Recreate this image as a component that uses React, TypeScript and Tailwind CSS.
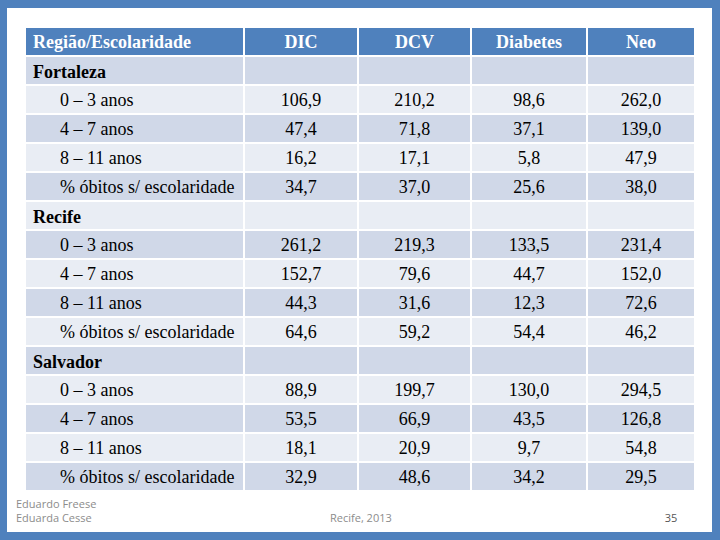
const regions = [
  {
    name: "Fortaleza",
    rows: [
      ["0 – 3 anos", "106,9", "210,2", "98,6", "262,0"],
      ["4 – 7 anos", "47,4", "71,8", "37,1", "139,0"],
      ["8 – 11 anos", "16,2", "17,1", "5,8", "47,9"],
      ["% óbitos s/ escolaridade", "34,7", "37,0", "25,6", "38,0"],
    ],
  },
  {
    name: "Recife",
    rows: [
      ["0 – 3 anos", "261,2", "219,3", "133,5", "231,4"],
      ["4 – 7 anos", "152,7", "79,6", "44,7", "152,0"],
      ["8 – 11 anos", "44,3", "31,6", "12,3", "72,6"],
      ["% óbitos s/ escolaridade", "64,6", "59,2", "54,4", "46,2"],
    ],
  },
  {
    name: "Salvador",
    rows: [
      ["0 – 3 anos", "88,9", "199,7", "130,0", "294,5"],
      ["4 – 7 anos", "53,5", "66,9", "43,5", "126,8"],
      ["8 – 11 anos", "18,1", "20,9", "9,7", "54,8"],
      ["% óbitos s/ escolaridade", "32,9", "48,6", "34,2", "29,5"],
    ],
  },
];

const headers = ["DIC", "DCV", "Diabetes", "Neo"];

export default function App() {
  // flatten into rows so the stripes alternate across the whole table
  const rows: { label: string; values: string[]; region: boolean }[] = [];
  regions.forEach((r) => {
    rows.push({ label: r.name, values: ["", "", "", ""], region: true });
    r.rows.forEach((row) =>
      rows.push({ label: row[0], values: row.slice(1), region: false })
    );
  });

  return (
    <div className="w-[720px] h-[540px] bg-[#4f81bd] pt-[8px] pl-[7px] pr-[8px] pb-[8px]">
      <div className="h-full w-full bg-white flex flex-col">
        <div
          className="ml-[19px] mt-[20px] grid w-[668px] grid-cols-[217px_112px_111px_114px_106px] auto-rows-[27px] gap-[2px] text-[18px] leading-none text-black"
          style={{ fontFamily: '"Liberation Serif", "Times New Roman", serif' }}
        >
          <div className="flex items-center bg-[#4f81bd] pl-[7px] font-bold text-white">
            Região/Escolaridade
          </div>
          {headers.map((h) => (
            <div
              key={h}
              className="flex items-center justify-center bg-[#4f81bd] font-bold text-white"
            >
              {h}
            </div>
          ))}
          {rows.map((row, i) => {
            const bg = i % 2 === 0 ? "bg-[#d0d8e8]" : "bg-[#e9edf4]";
            return [
              <div
                key={`l${i}`}
                className={`flex items-center ${bg} ${
                  row.region ? "pl-[7px] pt-[3px] font-bold" : "pl-[34px]"
                }`}
              >
                {row.label}
              </div>,
              ...row.values.map((v, j) => (
                <div
                  key={`v${i}-${j}`}
                  className={`flex items-center justify-center ${bg}`}
                >
                  {v}
                </div>
              )),
            ];
          })}
        </div>

        <div
          className="mt-[7px] flex items-end text-[11px] leading-[14px] text-[#8c8c8c]"
          style={{ fontFamily: '"Open Sans", "Liberation Sans", sans-serif' }}
        >
          <div className="pl-[9px] w-[260px]">
            <p>Eduardo Freese</p>
            <p>Eduarda Cesse</p>
          </div>
          <p className="ml-[63px]">Recife, 2013</p>
          <p className="ml-[273px] text-[#555]">35</p>
        </div>
      </div>
    </div>
  );
}
